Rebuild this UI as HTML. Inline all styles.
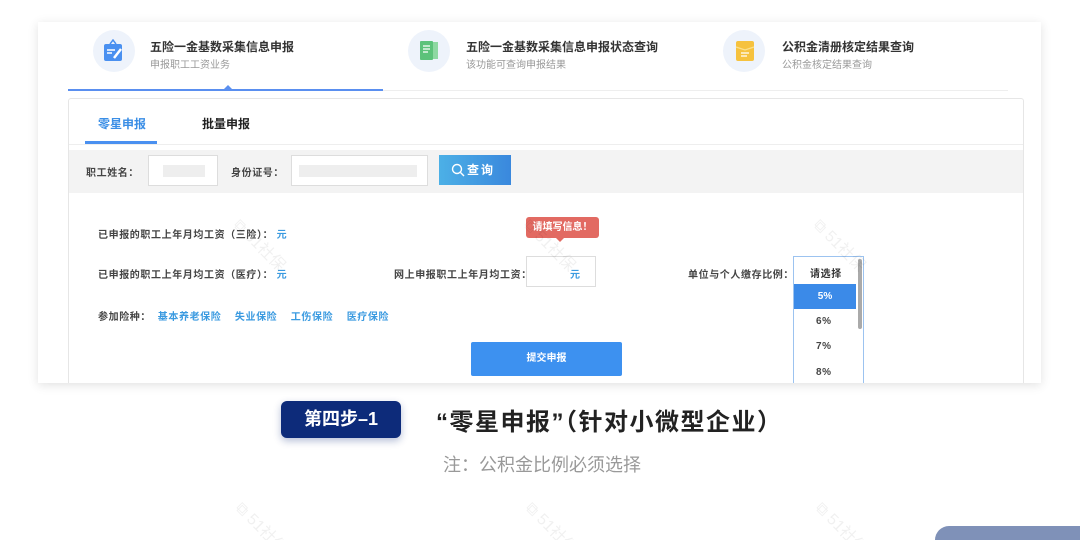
<!DOCTYPE html>
<html><head><meta charset="utf-8"><style>
*{margin:0;padding:0;box-sizing:border-box}
html,body{width:1080px;height:540px;overflow:hidden}
body{background:#fff;position:relative;font-family:"Liberation Sans","Noto Sans CJK SC",sans-serif;}
.a{position:absolute}
.card{left:38px;top:22px;width:1003px;height:361px;background:#fff;box-shadow:0 2px 10px rgba(0,0,0,.12);overflow:hidden}
.t{font-size:12px;font-weight:bold;color:#333;white-space:nowrap}
.s{font-size:10px;color:#999;white-space:nowrap}
.ic{width:42px;height:42px;border-radius:50%;background:#eef3fb}
.lbl{font-size:10px;font-weight:bold;color:#444;white-space:nowrap;letter-spacing:.6px}
.blue{color:#3a9ae0}
.wm{font-size:16px;color:rgba(0,0,0,.06);transform:rotate(45deg);white-space:nowrap}
</style></head><body>
<div class="a card">
  <div class="a ic" style="left:55px;top:8px"></div>
  <svg class="a" style="left:64px;top:17px" width="24" height="24" viewBox="0 0 24 24"><rect x="2" y="5" width="18" height="17" rx="2" fill="#4a90f0"/><path d="M8 5 L11 1 L14 5" stroke="#4a90f0" fill="none" stroke-width="1.5"/><path d="M5 11h8M5 14h5" stroke="#fff" stroke-width="1.5"/><path d="M12 19 L19 10" stroke="#fff" stroke-width="2.5"/></svg>
  <div class="a t" style="left:112px;top:16px">五险一金基数采集信息申报</div>
  <div class="a s" style="left:112px;top:34px">申报职工工资业务</div>

  <div class="a ic" style="left:370px;top:8px"></div>
  <svg class="a" style="left:380px;top:17px" width="24" height="24" viewBox="0 0 24 24"><rect x="2" y="2" width="13" height="19" rx="1" fill="#5cc27a"/><rect x="15" y="3" width="5" height="17" fill="#8ed8a2"/><path d="M5 7h7M5 10h7M5 13h5" stroke="#fff" stroke-width="1.3"/></svg>
  <div class="a t" style="left:428px;top:16px">五险一金基数采集信息申报状态查询</div>
  <div class="a s" style="left:428px;top:34px">该功能可查询申报结果</div>

  <div class="a ic" style="left:685px;top:8px"></div>
  <svg class="a" style="left:695px;top:17px" width="24" height="24" viewBox="0 0 24 24"><rect x="3" y="2" width="18" height="20" rx="2" fill="#f6c23e"/><path d="M3 8 L12 11 L21 8" stroke="#fbe08c" fill="none" stroke-width="1.3"/><path d="M8 14h8M8 17h6" stroke="#fff" stroke-width="1.3"/></svg>
  <div class="a t" style="left:744px;top:16px">公积金清册核定结果查询</div>
  <div class="a s" style="left:744px;top:34px">公积金核定结果查询</div>

  <div class="a" style="left:30px;top:67px;width:315px;height:2px;background:#5a8ff0"></div>
  <div class="a" style="left:186px;top:63px;width:0;height:0;border-left:4px solid transparent;border-right:4px solid transparent;border-bottom:4px solid #5a8ff0"></div>
  <div class="a" style="left:345px;top:68px;width:625px;height:1px;background:#eee"></div>

  <div class="a" style="left:30px;top:76px;width:956px;height:300px;border:1px solid #e6e6e6;border-radius:3px;background:#fff">
    <div class="a" style="left:29px;top:16px;font-size:12px;font-weight:bold;color:#3a8ee6">零星申报</div>
    <div class="a" style="left:133px;top:16px;font-size:12px;font-weight:bold;color:#222">批量申报</div>
    <div class="a" style="left:16px;top:42px;width:72px;height:3px;background:#4a90f0"></div>
    <div class="a" style="left:0;top:45px;width:954px;height:1px;background:#eee"></div>
    <div class="a" style="left:0;top:51px;width:954px;height:43px;background:#f3f3f3"></div>
    <div class="a lbl" style="left:17px;top:65px">职工姓名：</div>
    <div class="a" style="left:79px;top:56px;width:70px;height:31px;background:#fff;border:1px solid #ddd"><div class="a" style="left:14px;top:9px;width:42px;height:12px;background:#eee"></div></div>
    <div class="a lbl" style="left:162px;top:65px">身份证号：</div>
    <div class="a" style="left:222px;top:56px;width:137px;height:31px;background:#fff;border:1px solid #ddd"><div class="a" style="left:7px;top:9px;width:118px;height:12px;background:#eee"></div></div>
    <div class="a" style="left:370px;top:56px;width:72px;height:30px;background:linear-gradient(90deg,#4cb0e6,#3a88dd);color:#fff;font-size:12px;font-weight:bold;line-height:30px;padding-left:28px;letter-spacing:2px">查询</div>
    <svg class="a" style="left:382px;top:64px" width="14" height="14" viewBox="0 0 14 14"><circle cx="6" cy="6" r="4.5" stroke="#fff" stroke-width="1.4" fill="none"/><path d="M9.5 9.5L13 13" stroke="#fff" stroke-width="1.4"/></svg>

    <div class="a lbl" style="left:29px;top:127px">已申报的职工上年月均工资（三险）： <span class="blue">元</span></div>
    <div class="a lbl" style="left:29px;top:167px">已申报的职工上年月均工资（医疗）： <span class="blue">元</span></div>
    <div class="a lbl" style="left:29px;top:209px">参加险种：&nbsp; <span class="blue">基本养老保险&nbsp;&nbsp;&nbsp;&nbsp;失业保险&nbsp;&nbsp;&nbsp;&nbsp;工伤保险&nbsp;&nbsp;&nbsp;&nbsp;医疗保险</span></div>

    <div class="a lbl" style="left:325px;top:167px">网上申报职工上年月均工资：</div>
    <div class="a" style="left:457px;top:157px;width:70px;height:31px;border:1px solid #ddd;background:#fff"><span class="a blue" style="left:43px;top:9px;font-size:10px;font-weight:bold">元</span></div>
    <div class="a" style="left:457px;top:118px;width:73px;height:21px;background:#e26a62;border-radius:3px;color:#fff;font-size:10px;font-weight:bold;line-height:21px;text-align:center">请填写信息！</div>
    <div class="a" style="left:487px;top:139px;width:0;height:0;border-left:4px solid transparent;border-right:4px solid transparent;border-top:4px solid #e26a62"></div>

    <div class="a lbl" style="left:619px;top:167px">单位与个人缴存比例：</div>
    <div class="a" style="left:724px;top:157px;width:71px;height:150px;border:1px solid #9cc3f0;background:#fff">
      <div class="a lbl" style="left:16px;top:8px;color:#333">请选择</div>
      <div class="a" style="left:0;top:27px;width:62px;height:25px;background:#3b8ae8;color:#fff;font-size:10px;font-weight:bold;text-align:center;line-height:25px">5%</div>
      <div class="a lbl" style="left:22px;top:59px">6%</div>
      <div class="a lbl" style="left:22px;top:84px">7%</div>
      <div class="a lbl" style="left:22px;top:110px">8%</div>
      <div class="a" style="left:64px;top:2px;width:4px;height:70px;background:#aaa;border-radius:2px"></div>
    </div>
    <div class="a" style="left:402px;top:243px;width:151px;height:34px;background:#3d91f0;border-radius:2px;color:#fff;font-size:10px;font-weight:bold;text-align:center;line-height:34px">提交申报</div>
  </div>
  <div class="a wm" style="left:190px;top:210px">⧉ 51社保</div>
  <div class="a wm" style="left:480px;top:210px">⧉ 51社保</div>
  <div class="a wm" style="left:770px;top:210px">⧉ 51社保</div>
</div>

<div class="a" style="left:281px;top:401px;width:120px;height:37px;background:#0d2b7a;border-radius:6px;box-shadow:0 3px 8px rgba(13,43,122,.3);color:#fff;font-size:18px;font-weight:bold;text-align:center;line-height:37px">第四步–1</div>
<div class="a" style="left:436px;top:402px;font-size:24px;font-weight:bold;color:#222;white-space:nowrap;letter-spacing:1.5px">“零星申报”（针对小微型企业）</div>
<div class="a" style="left:443px;top:451px;font-size:18px;color:#999;white-space:nowrap">注：公积金比例必须选择</div>
<div class="a wm" style="left:230px;top:515px">⧉ 51社保</div>
<div class="a wm" style="left:520px;top:515px">⧉ 51社保</div>
<div class="a wm" style="left:810px;top:515px">⧉ 51社保</div>
<div class="a" style="left:935px;top:526px;width:145px;height:14px;background:#7f91b8;border-radius:14px 0 0 0"></div>
</body></html>
